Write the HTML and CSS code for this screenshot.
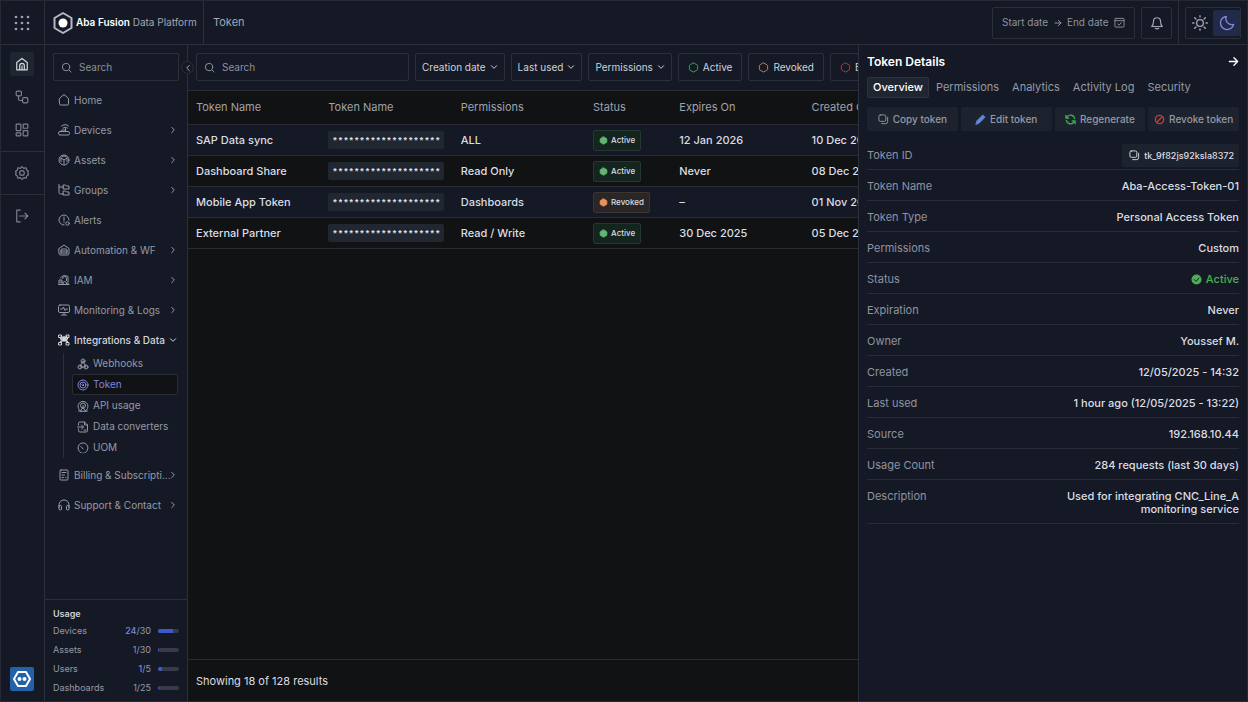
FILE: index.html
```html
<!DOCTYPE html>
<html lang="en">
<head>
    <meta charset="UTF-8">
    <meta name="viewport" content="width=device-width, initial-scale=1.0">
    <title>Aba Fusion Data Platform – Token</title>
    <link rel="stylesheet" href="styles.css">
</head>
<body>

    <!-- icon set -->
    <svg class="sprite" aria-hidden="true">
        <symbol id="i-search" viewBox="0 0 24 24"><circle cx="11" cy="11" r="8"/><path d="M17 17l5 5"/></symbol>
        <symbol id="i-right" viewBox="0 0 24 24"><path d="M8 4l8 8-8 8"/></symbol>
        <symbol id="i-left" viewBox="0 0 24 24"><path d="M16 4l-8 8 8 8"/></symbol>
        <symbol id="i-down" viewBox="0 0 24 24"><path d="M4 8l8 8 8-8"/></symbol>
        <symbol id="i-arrow" viewBox="0 0 24 24"><path d="M3 12h18M13 4l8 8-8 8"/></symbol>
        <symbol id="i-grid" viewBox="0 0 24 24"><g fill="currentColor" stroke="none"><circle cx="3" cy="3" r="2"/><circle cx="12" cy="3" r="2"/><circle cx="21" cy="3" r="2"/><circle cx="3" cy="12" r="2"/><circle cx="12" cy="12" r="2"/><circle cx="21" cy="12" r="2"/><circle cx="3" cy="21" r="2"/><circle cx="12" cy="21" r="2"/><circle cx="21" cy="21" r="2"/></g></symbol>
        <symbol id="i-house" viewBox="0 0 24 24"><path d="M3 9.500l9-7 9 7V22H3zM8 22v-7a4 4 0 0 1 8 0v7M12 15v7"/></symbol>
        <symbol id="i-flow" viewBox="0 0 24 24"><rect x="2" y="2" width="9" height="8" rx="2"/><rect x="13" y="13" width="9" height="9" rx="2"/><path d="M6 10v5a3 3 0 0 0 3 3h4"/></symbol>
        <symbol id="i-tiles" viewBox="0 0 24 24"><rect x="2" y="2" width="8" height="11" rx="1"/><rect x="14" y="2" width="8" height="7" rx="1"/><rect x="2" y="17" width="8" height="5" rx="1"/><rect x="14" y="13" width="8" height="9" rx="1"/></symbol>
        <symbol id="i-gear" viewBox="0 0 24 24"><path d="M12 1l3 3 4-1 1 4 3 2-1 3 1 3-3 2-1 4-4-1-3 3-3-3-4 1-1-4-3-2 1-3-1-3 3-2 1-4 4 1z"/><circle cx="12" cy="12" r="4"/></symbol>
        <symbol id="i-logout" viewBox="0 0 24 24"><path d="M9 2H3v20h6M8 12h14M17 7l5 5-5 5"/></symbol>
        <symbol id="i-home" viewBox="0 0 24 24"><path d="M3 9l7-6.500q2-1.500 4 0L21 9v11q0 2-2 2H5q-2 0-2-2z"/></symbol>
        <symbol id="i-router" viewBox="0 0 24 24"><rect x="1" y="15" width="22" height="7" rx="3"/><path d="M15 15V9M7 4q8-6 14 0M10 8q5-4 9 0M5 15q1-3 4-3h6"/></symbol>
        <symbol id="i-cube" viewBox="0 0 24 24"><circle cx="12" cy="12" r="10"/><path d="M6 8l6 4 6-4M12 12v8M6 8v7M18 8v7M8 5l4-1 4 1"/></symbol>
        <symbol id="i-tree" viewBox="0 0 24 24"><path d="M2 1v16q0 3 3 3h6M2 6h9M11 2h4l2 2h5v6H11zM11 14h4l2 2h5v6H11z"/></symbol>
        <symbol id="i-alert" viewBox="0 0 24 24"><path d="M12 22a10 10 0 1 1 10-10M12 6v7M12 16v1"/><circle cx="19" cy="19" r="3.500"/></symbol>
        <symbol id="i-auto" viewBox="0 0 24 24"><path d="M2 9l10-7 10 7v10q0 3-3 3H5q-3 0-3-3z"/><path d="M6 19v-7q0-2 2-2h8q2 0 2 2v7M6 14h12M6 18h12"/></symbol>
        <symbol id="i-iam" viewBox="0 0 24 24"><path d="M5 8q5-8 15-3v16M2 21h20M2 21v-9h6v9M9 9a4 4 0 0 1 8 0v4M10 21v-4q3-4 7 0v4M4 16h3"/></symbol>
        <symbol id="i-monitor" viewBox="0 0 24 24"><rect x="1" y="2" width="22" height="15" rx="3"/><path d="M5 10h4l2-4 3 7 2-3h3M12 17v5M7 22h10"/></symbol>
        <symbol id="i-nodes" viewBox="0 0 24 24"><rect x="2" y="2" width="5" height="5"/><rect x="17" y="2" width="5" height="5"/><rect x="2" y="17" width="5" height="5"/><rect x="17" y="17" width="5" height="5"/><path stroke-width="3" d="M5 7q0 5 7 5t7-5M12 5v9M5 17q0-4 7-4t7 4M7 5l5 6 5-6"/></symbol>
        <symbol id="i-webhook" viewBox="0 0 24 24"><circle cx="12" cy="6" r="4"/><circle cx="6" cy="18" r="4"/><circle cx="18" cy="18" r="4"/><path d="M12 6l-6 11M12 6l6 12H7"/></symbol>
        <symbol id="i-token" viewBox="0 0 24 24"><circle cx="12" cy="12" r="10"/><circle cx="12" cy="12" r="6"/><path d="M12 10l2 2-2 2-2-2z"/></symbol>
        <symbol id="i-api" viewBox="0 0 24 24"><path d="M5 20a10 10 0 1 1 14 0"/><circle cx="12" cy="11" r="5"/><path d="M12 11v5M7 22l3-5h4l3 5zM3 22h5M16 22h5"/></symbol>
        <symbol id="i-convert" viewBox="0 0 24 24"><path d="M3 8V5q0-3 3-3h9l6 6v11q0 3-3 3H6q-3 0-3-3v-3M1 12h12M9 8l4 4-4 4M15 2v6h6M14 18h4"/></symbol>
        <symbol id="i-uom" viewBox="0 0 24 24"><path d="M5 19a10 10 0 1 1 14 0M12 14L8 9M12 22h.1M7 21h1M16 21h1"/></symbol>
        <symbol id="i-bill" viewBox="0 0 24 24"><rect x="4" y="2" width="16" height="20" rx="2"/><path d="M8 7h8M8 12h5M8 17h3M15 17h1"/></symbol>
        <symbol id="i-support" viewBox="0 0 24 24"><path d="M2 17v-5a10 10 0 0 1 20 0v5"/><rect x="2" y="13" width="5" height="9" rx="2"/><rect x="17" y="13" width="5" height="9" rx="2"/></symbol>
        <symbol id="i-calendar" viewBox="0 0 24 24"><rect x="2" y="3" width="20" height="19" rx="2"/><path d="M2 8h20M8 15l3 3 5-6"/></symbol>
        <symbol id="i-bell" viewBox="0 0 24 24"><path d="M3 18q3-3 3-9a6 6 0 0 1 12 0q0 6 3 9zM9 21q3 2 6 0"/></symbol>
        <symbol id="i-sun" viewBox="0 0 24 24"><circle cx="12" cy="12" r="5"/><path d="M12 1v2M12 21v2M1 12h2M21 12h2M4 4l2 2M18 18l2 2M4 20l2-2M18 6l2-2"/></symbol>
        <symbol id="i-moon" viewBox="0 0 24 24"><path d="M11 2a10 10 0 1 0 11 12A9 9 0 0 1 11 2z"/></symbol>
        <symbol id="i-copy" viewBox="0 0 24 24"><rect x="2" y="2" width="15" height="14" rx="3"/><path d="M21 7v10q0 4-4 4H8"/></symbol>
        <symbol id="i-pencil" viewBox="0 0 24 24"><path fill="currentColor" d="M2 22l2-7L17 2l5 5L9 20z"/></symbol>
        <symbol id="i-refresh" viewBox="0 0 24 24"><path stroke-width="3" d="M21 10A9 9 0 0 0 5 6L3 9M2 3v6h6M3 14a9 9 0 0 0 16 4l2-3M22 21v-6h-6"/></symbol>
        <symbol id="i-ban" viewBox="0 0 24 24"><g stroke-width="3"><circle cx="12" cy="12" r="9"/><path d="M6 18L18 6"/></g></symbol>
        <symbol id="i-hex" viewBox="0 0 24 24"><path d="M12 2l8 4.500q1 .5 1 1.500v8q0 1-1 1.500L12 22l-8-4.500Q3 17 3 16V8q0-1 1-1.500z"/></symbol>
        <symbol id="i-check" viewBox="0 0 24 24"><circle cx="12" cy="12" r="11" fill="currentColor" stroke="none"/><path stroke="#141925" d="M7 12l4 4 6-7"/></symbol>
    </svg>

    <header class="topbar">
        <button class="apps" aria-label="Apps"><svg class="icon"><use href="#i-grid"/></svg></button>
        <a href="#" class="brand">
            <svg class="brand-mark" viewBox="0 0 22 24"><path d="M11 2l8.500 5v10L11 22l-8.500-5V7z" fill="none" stroke="#b5b8c5" stroke-width="2" stroke-linejoin="round"/><circle cx="11" cy="12" r="4.500" fill="#fff"/></svg>
            <span><b>Aba Fusion</b> Data Platform</span>
        </a>
        <h1 class="page-title">Token</h1>
        <div class="top-tools">
            <button class="date-range">
                <span>Start date</span>
                <svg class="icon tiny"><use href="#i-arrow"/></svg>
                <span>End date</span>
                <svg class="icon small"><use href="#i-calendar"/></svg>
            </button>
            <button class="bell" aria-label="Notifications"><svg class="icon"><use href="#i-bell"/></svg></button>
        </div>
        <div class="theme-area">
            <div class="theme">
                <button aria-label="Light theme"><svg class="icon"><use href="#i-sun"/></svg></button>
                <button class="on" aria-label="Dark theme"><svg class="icon"><use href="#i-moon"/></svg></button>
            </div>
        </div>
    </header>

    <div class="layout">
        <nav class="rail" aria-label="Workspace">
            <div class="rail-group">
                <a href="#" class="current" aria-label="Home"><svg class="icon"><use href="#i-house"/></svg></a>
                <a href="#" aria-label="Flows"><svg class="icon"><use href="#i-flow"/></svg></a>
                <a href="#" aria-label="Dashboards"><svg class="icon"><use href="#i-tiles"/></svg></a>
            </div>
            <div class="rail-group"><a href="#" aria-label="Settings"><svg class="icon"><use href="#i-gear"/></svg></a></div>
            <div class="rail-group"><a href="#" aria-label="Log out"><svg class="icon"><use href="#i-logout"/></svg></a></div>
            <a href="#" class="bot" aria-label="Assistant">
                <svg viewBox="0 0 24 24"><path d="M8 5h8l4 7-4 7H8l-4-7z" fill="none" stroke="#fff" stroke-width="2" stroke-linejoin="round"/><circle cx="9.500" cy="12" r="2" fill="#fff"/><circle cx="14.500" cy="12" r="2" fill="#fff"/></svg>
            </a>
        </nav>

        <aside class="sidebar">
            <label class="search">
                <svg class="icon small"><use href="#i-search"/></svg>
                <input type="search" placeholder="Search" aria-label="Search menu">
            </label>
            <button class="collapse" aria-label="Collapse menu"><svg class="icon tiny"><use href="#i-left"/></svg></button>

            <nav class="menu" aria-label="Main">
                <a href="#"><svg class="icon small"><use href="#i-home"/></svg><span>Home</span></a>
                <a href="#"><svg class="icon small"><use href="#i-router"/></svg><span>Devices</span><svg class="icon tiny"><use href="#i-right"/></svg></a>
                <a href="#"><svg class="icon small"><use href="#i-cube"/></svg><span>Assets</span><svg class="icon tiny"><use href="#i-right"/></svg></a>
                <a href="#"><svg class="icon small"><use href="#i-tree"/></svg><span>Groups</span><svg class="icon tiny"><use href="#i-right"/></svg></a>
                <a href="#"><svg class="icon small"><use href="#i-alert"/></svg><span>Alerts</span></a>
                <a href="#"><svg class="icon small"><use href="#i-auto"/></svg><span>Automation &amp; WF</span><svg class="icon tiny"><use href="#i-right"/></svg></a>
                <a href="#"><svg class="icon small"><use href="#i-iam"/></svg><span>IAM</span><svg class="icon tiny"><use href="#i-right"/></svg></a>
                <a href="#"><svg class="icon small"><use href="#i-monitor"/></svg><span>Monitoring &amp; Logs</span><svg class="icon tiny"><use href="#i-right"/></svg></a>
                <div class="menu-group">
                    <a href="#" class="open"><svg class="icon small"><use href="#i-nodes"/></svg><span>Integrations &amp; Data</span><svg class="icon tiny"><use href="#i-down"/></svg></a>
                    <div class="submenu">
                        <a href="#"><svg class="icon small"><use href="#i-webhook"/></svg><span>Webhooks</span></a>
                        <a href="#" class="current"><svg class="icon small"><use href="#i-token"/></svg><span>Token</span></a>
                        <a href="#"><svg class="icon small"><use href="#i-api"/></svg><span>API usage</span></a>
                        <a href="#"><svg class="icon small"><use href="#i-convert"/></svg><span>Data converters</span></a>
                        <a href="#"><svg class="icon small"><use href="#i-uom"/></svg><span>UOM</span></a>
                    </div>
                </div>
                <a href="#"><svg class="icon small"><use href="#i-bill"/></svg><span>Billing &amp; Subscripti...</span><svg class="icon tiny"><use href="#i-right"/></svg></a>
                <a href="#"><svg class="icon small"><use href="#i-support"/></svg><span>Support &amp; Contact</span><svg class="icon tiny"><use href="#i-right"/></svg></a>
            </nav>

            <section class="usage">
                <h2>Usage</h2>
                <div class="usage-row"><span>Devices</span><span><em>24</em>/30</span><div class="bar"><i style="width: 70%"></i></div></div>
                <div class="usage-row"><span>Assets</span><span>1/30</span><div class="bar"><i style="width: 4%"></i></div></div>
                <div class="usage-row"><span>Users</span><span><em>1</em>/5</span><div class="bar"><i style="width: 20%"></i></div></div>
                <div class="usage-row"><span>Dashboards</span><span>1/25</span><div class="bar"><i style="width: 5%"></i></div></div>
            </section>
        </aside>

        <main class="content">
            <div class="filters">
                <label class="search">
                    <svg class="icon small"><use href="#i-search"/></svg>
                    <input type="search" placeholder="Search" aria-label="Search tokens">
                </label>
                <button>Creation date <svg class="icon tiny"><use href="#i-down"/></svg></button>
                <button>Last used <svg class="icon tiny"><use href="#i-down"/></svg></button>
                <button>Permissions <svg class="icon tiny"><use href="#i-down"/></svg></button>
                <button class="state"><svg class="icon small green"><use href="#i-hex"/></svg> Active</button>
                <button class="state"><svg class="icon small orange"><use href="#i-hex"/></svg> Revoked</button>
                <button class="state"><svg class="icon small red"><use href="#i-hex"/></svg> Expired</button>
            </div>

            <div class="table-wrap">
                <table>
                    <colgroup><col class="first"><col><col><col class="status"><col><col></colgroup>
                    <thead>
                        <tr><th>Token Name</th><th>Token Name</th><th>Permissions</th><th>Status</th><th>Expires On</th><th>Created On</th></tr>
                    </thead>
                    <tbody>
                        <tr><td>SAP Data sync</td><td><code>********************</code></td><td>ALL</td><td><span class="badge active"><svg class="icon"><use href="#i-hex"/></svg>Active</span></td><td>12 Jan 2026</td><td>10 Dec 2025</td></tr>
                        <tr><td>Dashboard Share</td><td><code>********************</code></td><td>Read Only</td><td><span class="badge active"><svg class="icon"><use href="#i-hex"/></svg>Active</span></td><td>Never</td><td>08 Dec 2025</td></tr>
                        <tr><td>Mobile App Token</td><td><code>********************</code></td><td>Dashboards</td><td><span class="badge revoked"><svg class="icon"><use href="#i-hex"/></svg>Revoked</span></td><td>–</td><td>01 Nov 2025</td></tr>
                        <tr><td>External Partner</td><td><code>********************</code></td><td>Read / Write</td><td><span class="badge active"><svg class="icon"><use href="#i-hex"/></svg>Active</span></td><td>30 Dec 2025</td><td>05 Dec 2025</td></tr>
                    </tbody>
                </table>
            </div>

            <footer class="results">Showing 18 of 128 results</footer>
        </main>

        <aside class="details">
            <div class="details-head">
                <h2>Token Details</h2>
                <button aria-label="Close details"><svg class="icon small"><use href="#i-arrow"/></svg></button>
            </div>
            <div class="tabs">
                <button class="on">Overview</button>
                <button>Permissions</button>
                <button>Analytics</button>
                <button>Activity Log</button>
                <button>Security</button>
            </div>
            <div class="actions">
                <button><svg class="icon small"><use href="#i-copy"/></svg>Copy token</button>
                <button><svg class="icon small blue"><use href="#i-pencil"/></svg>Edit token</button>
                <button><svg class="icon small green"><use href="#i-refresh"/></svg>Regenerate</button>
                <button><svg class="icon small red"><use href="#i-ban"/></svg>Revoke token</button>
            </div>
            <dl>
                <div><dt>Token ID</dt><dd><button class="token-id"><svg class="icon small"><use href="#i-copy"/></svg>tk_9f82js92ksla8372</button></dd></div>
                <div><dt>Token Name</dt><dd>Aba-Access-Token-01</dd></div>
                <div><dt>Token Type</dt><dd>Personal Access Token</dd></div>
                <div><dt>Permissions</dt><dd>Custom</dd></div>
                <div><dt>Status</dt><dd class="ok"><svg class="icon small"><use href="#i-check"/></svg>Active</dd></div>
                <div><dt>Expiration</dt><dd>Never</dd></div>
                <div><dt>Owner</dt><dd>Youssef M.</dd></div>
                <div><dt>Created</dt><dd>12/05/2025 - 14:32</dd></div>
                <div><dt>Last used</dt><dd>1 hour ago (12/05/2025 - 13:22)</dd></div>
                <div><dt>Source</dt><dd>192.168.10.44</dd></div>
                <div><dt>Usage Count</dt><dd>284 requests (last 30 days)</dd></div>
                <div><dt>Description</dt><dd>Used for integrating CNC_Line_A<br>monitoring service</dd></div>
            </dl>
        </aside>
    </div>

</body>
</html>
```

FILE: styles.css
```css
* {
    box-sizing: border-box;
}

body {
    font-family: Inter, Roboto, sans-serif;
    font-size: 11px;
    line-height: 13px;
    background-color: #141925;
    color: #dcdde3;
    margin: 0;
    height: 100vh;
    display: flex;
    flex-direction: column;
    overflow: hidden;
    border: 1px solid #252a35;
}

h1, h2, dl, dd {
    margin: 0;
}

a {
    color: inherit;
    text-decoration: none;
}

button {
    font: inherit;
    color: inherit;
    background: none;
    border: none;
    padding: 0;
    cursor: pointer;
}

.sprite {
    display: none;
}

.icon {
    width: 14px;
    height: 14px;
    flex: none;
    fill: none;
    stroke: currentColor;
    stroke-width: 2;
    stroke-linecap: round;
    stroke-linejoin: round;
}

.icon.small {
    width: 11px;
    height: 11px;
}

.icon.tiny {
    width: 8px;
    height: 8px;
    stroke-width: 3;
}

.green { color: #3fa857; }
.orange { color: #c98352; }
.red { color: #b8403f; }
.blue { color: #5f86dc; }

/* top bar */
.topbar {
    display: flex;
    flex: none;
    height: 44px;
    border-bottom: 1px solid #2a2f3a;
}

.apps {
    width: 44px;
    padding-right: 2px;
    border-right: 1px solid #2a2f3a;
    color: #9fa2ae;
    display: flex;
    align-items: center;
    justify-content: center;
}

.apps .icon {
    width: 16px;
    height: 16px;
}

.brand {
    display: flex;
    align-items: center;
    gap: 2px;
    width: 159px;
    padding-left: 7px;
    font-size: 10px;
    color: #a3a6b3;
    border-right: 1px solid #2a2f3a;
    white-space: nowrap;
}

.brand b {
    color: #fff;
    font-weight: 600;
}

.brand-mark {
    width: 22px;
    height: 24px;
}

.page-title {
    align-self: center;
    margin-left: 9px;
    font-size: 11px;
    font-weight: 400;
    color: #a3a6b3;
}

.top-tools {
    display: flex;
    align-items: center;
    gap: 6px;
    margin-left: auto;
    padding-right: 6px;
}

.date-range, .bell, .theme {
    height: 32px;
    border: 1px solid #2a2f3a;
    border-radius: 2px;
    display: flex;
    align-items: center;
    color: #a3a6b3;
}

.date-range {
    padding: 0 9px;
    width: 143px;
    justify-content: space-between;
    font-size: 10px;
    color: #8f929e;
}

.bell {
    width: 31px;
    justify-content: center;
}

.theme-area {
    display: flex;
    align-items: center;
    padding: 0 6px;
    border-left: 1px solid #2a2f3a;
}

.theme button {
    width: 27px;
    height: 26px;
    display: flex;
    align-items: center;
    justify-content: center;
}

.theme .icon {
    width: 16px;
    height: 16px;
}

.theme .on {
    background-color: #222a49;
    color: #8089df;
    border-radius: 2px;
}

/* layout */
.layout {
    display: flex;
    flex: 1;
    min-height: 0;
}

.rail {
    width: 44px;
    border-right: 1px solid #2a2f3a;
    display: flex;
    flex-direction: column;
    align-items: center;
    color: #7e818e;
}

.rail-group {
    width: 100%;
    display: flex;
    flex-direction: column;
    align-items: center;
    gap: 9px;
    padding: 9px 2px 9px 0;
}

.rail-group:first-child {
    padding-top: 7px;
}

.rail-group + .rail-group {
    border-top: 1px solid #2a2f3a;
}

.rail-group a {
    width: 24px;
    height: 24px;
    border-radius: 2px;
    display: flex;
    align-items: center;
    justify-content: center;
}

.rail-group .current {
    background-color: #202631;
    color: #d8d9df;
}

.bot {
    width: 24px;
    height: 24px;
    margin: auto 2px 10px 0;
    background-color: #2361a8;
    border-radius: 2px;
}

/* sidebar */
.sidebar {
    position: relative;
    width: 143px;
    border-right: 1px solid #2a2f3a;
    display: flex;
    flex-direction: column;
    padding-top: 8px;
    font-size: 10px;
    color: #9699a5;
}

.search {
    display: flex;
    align-items: center;
    gap: 7px;
    height: 28px;
    padding: 0 7px;
    border: 1px solid #2a2f3a;
    border-radius: 2px;
    color: #9598a4;
}

.sidebar .search {
    margin: 0 8px;
}

.search input {
    flex: 1;
    min-width: 0;
    padding: 0;
    border: none;
    outline: none;
    background: none;
    color: #dcdde3;
    font: inherit;
    font-size: 10px;
}

.search input::placeholder {
    color: #8d909c;
}

.collapse {
    position: absolute;
    top: 16px;
    right: -7px;
    width: 13px;
    height: 13px;
    border: 1px solid #2a2f3a;
    border-radius: 50%;
    background-color: #141925;
    color: #a3a6b3;
    display: flex;
    align-items: center;
    justify-content: center;
}

.menu {
    display: flex;
    flex-direction: column;
    gap: 4px;
    padding: 6px 10px 0 13px;
}

.menu a {
    display: flex;
    align-items: center;
    gap: 4px;
    height: 26px;
    white-space: nowrap;
}

.menu .icon.small {
    width: 12px;
    height: 12px;
}

.menu span {
    flex: 1;
    min-width: 0;
}

.menu .open {
    color: #d3d4da;
    font-weight: 500;
}

.submenu {
    margin: 0 -1px 0 5px;
    padding-left: 8px;
    border-left: 1px solid #2a2f3a;
}

.submenu a {
    height: 21px;
    padding-left: 4px;
    border: 1px solid transparent;
    border-radius: 2px;
}

.submenu .current {
    background-color: #111215;
    border-color: #2a2c33;
    color: #7d86dc;
}

.usage {
    margin-top: auto;
    padding: 7px 8px 4px;
    border-top: 1px solid #2a2f3a;
    font-size: 9px;
}

.usage h2 {
    font-size: 9px;
    line-height: 14px;
    font-weight: 600;
    color: #cfd0d6;
}

.usage-row {
    display: flex;
    align-items: center;
    height: 19px;
    gap: 7px;
}

.usage-row span:first-child {
    flex: 1;
}

.usage-row em {
    font-style: normal;
    font-weight: 500;
    color: #7d86dc;
}

.bar {
    width: 21px;
    height: 4px;
    border-radius: 2px;
    background-color: #363a49;
    overflow: hidden;
}

.bar i {
    display: block;
    height: 100%;
    background-color: #4159c8;
}

/* tokens table */
.content {
    flex: 1;
    min-width: 0;
    display: flex;
    flex-direction: column;
    background-color: #111214;
    overflow: hidden;
}

.filters {
    display: flex;
    flex: none;
    gap: 6px;
    padding: 8px;
    height: 45px;
    background-color: #141925;
}

.filters .search {
    flex: none;
    width: 213px;
}

.filters button {
    display: flex;
    flex: none;
    align-items: center;
    gap: 4px;
    height: 28px;
    padding: 0 6px;
    border: 1px solid #2a2f3a;
    border-radius: 2px;
    font-size: 10px;
    color: #d0d2da;
}

.filters .state {
    padding: 0 9px;
}

.table-wrap {
    flex: 1;
    overflow: hidden;
}

table {
    width: 756px;
    min-width: 100%;
    table-layout: fixed;
    border-collapse: collapse;
}

col {
    width: 132px;
}

col.first {
    width: 140px;
}

col.status {
    width: 86px;
}

th, td {
    padding: 0;
    text-align: left;
    white-space: nowrap;
    border-bottom: 1px solid #292c33;
}

th:first-child, td:first-child {
    padding-left: 8px;
}

th {
    height: 34px;
    font-weight: 400;
    color: #a0a2ab;
    border-top: 1px solid #292c33;
}

td {
    height: 31px;
    font-weight: 500;
}

tbody tr:nth-child(odd) {
    background-color: #141925;
}

td code {
    display: inline-flex;
    align-items: center;
    height: 18px;
    padding: 4px 4px 0;
    border-radius: 2px;
    background-color: #202731;
    font-family: "Liberation Mono", monospace;
    font-size: 9px;
    font-weight: 700;
    vertical-align: middle;
}

.badge {
    display: inline-flex;
    align-items: center;
    gap: 3px;
    height: 21px;
    padding: 0 5px;
    border: 1px solid #23382f;
    border-radius: 2px;
    font-size: 8px;
    vertical-align: middle;
}

.badge .icon {
    width: 9px;
    height: 9px;
    fill: currentColor;
}

.badge.active {
    background-color: #14241f;
}

.badge.active .icon {
    color: #62b573;
}

.badge.revoked {
    background-color: #2a2625;
    border-color: #3b3431;
}

.badge.revoked .icon {
    color: #e8925e;
}

.results {
    flex: none;
    height: 42px;
    line-height: 42px;
    padding: 0 8px;
    border-top: 1px solid #292c33;
}

/* details panel */
.details {
    width: 389px;
    flex: none;
    padding: 8px 8px 0;
    border-left: 1px solid #2a2f3a;
    background-color: #141925;
}

.details-head {
    display: flex;
    align-items: center;
    justify-content: space-between;
    height: 16px;
    color: #fff;
}

.details-head h2 {
    font-size: 12px;
    font-weight: 600;
}

.details-head .icon {
    display: block;
    stroke-width: 3;
}

.tabs {
    display: flex;
    gap: 1px;
    margin-top: 8px;
    color: #9699a5;
}

.tabs button {
    height: 21px;
    padding: 0 5px;
    border: 1px solid transparent;
    border-radius: 2px;
}

.tabs .on {
    background-color: #202631;
    border-color: #2d323d;
    font-weight: 500;
    color: #fff;
}

.actions {
    display: grid;
    grid-template-columns: repeat(4, 1fr);
    gap: 3px;
    margin-top: 9px;
    font-size: 10px;
    font-weight: 500;
    color: #9598a4;
}

.actions button {
    display: flex;
    align-items: center;
    justify-content: center;
    gap: 4px;
    height: 24px;
    border-radius: 2px;
    background-color: #1d232e;
}

.details dl {
    margin-top: 8px;
}

.details dl div {
    display: flex;
    justify-content: space-between;
    min-height: 31px;
    padding: 10px 0 7px;
    border-bottom: 1px solid #262b36;
}

dt {
    color: #9093a0;
}

dd {
    display: flex;
    align-items: center;
    gap: 4px;
    font-weight: 500;
    text-align: right;
}

.ok {
    color: #4caf55;
}

.token-id {
    display: flex;
    align-items: center;
    gap: 4px;
    height: 23px;
    margin: -5px 0;
    padding: 0 5px 0 7px;
    border-radius: 2px;
    background-color: #1d232e;
    font-size: 9px;
}
```
